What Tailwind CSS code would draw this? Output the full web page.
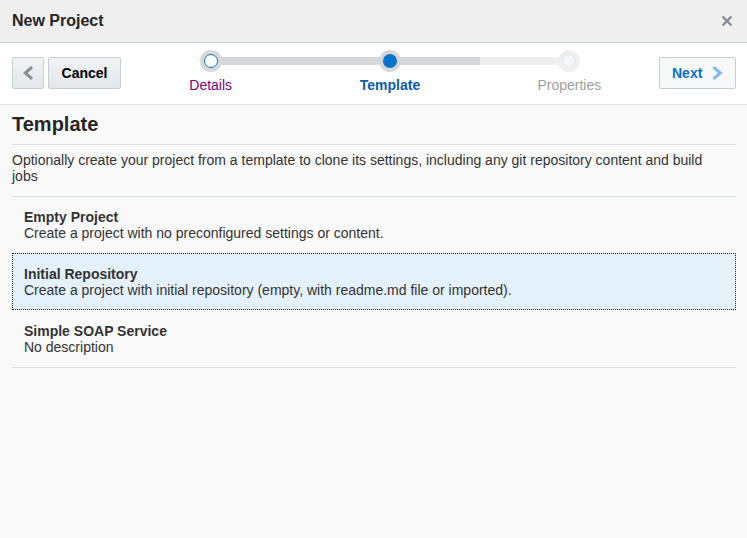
<!DOCTYPE html>
<html lang="en">
<head>
<meta charset="utf-8">
<meta name="viewport" content="width=device-width, initial-scale=1">
<title>New Project</title>
<script src="https://cdn.jsdelivr.net/npm/@tailwindcss/browser@4"></script>
</head>
<body class="min-h-screen bg-[#f9f9f9] font-['Liberation_Sans',Arial,sans-serif] text-sm/4 text-[#333333]">
<header class="flex items-center justify-between border-b border-[#c4ced7] bg-[#efefef] pt-2 pr-3 pb-2 pl-3">
  <h1 class="text-base/[26px] font-bold text-[#252525]">New Project</h1>
  <button type="button" aria-label="Close" class="flex size-4 items-center justify-center text-[#878b8f]">
    <svg class="size-[10px] shrink-0" viewBox="0 0 10 10" fill="none" stroke="currentColor" stroke-width="2.200"><path d="M0.500 0.500l9 9M9.500 0.500l-9 9"/></svg>
  </button>
</header>
<nav aria-label="Wizard" class="flex items-start border-b border-[#dfe6ea] bg-white pt-[7px] pr-[11px] pb-[11px] pl-3">
  <div class="mt-[7px] flex gap-1">
    <button type="button" aria-label="Back" class="flex size-8 items-center justify-center rounded-xs border border-[#c4ced7] bg-linear-to-b from-[#f1f3f5] to-[#e3e7ea] text-[#8b8e91]">
      <svg class="h-[14px] w-[10px]" viewBox="0 0 10 14" fill="none" stroke="currentColor" stroke-width="3"><path d="M9 1.200L2.200 7L9 12.800"/></svg>
    </button>
    <button type="button" class="h-8 min-w-[73px] rounded-xs border border-[#c4ced7] bg-linear-to-b from-[#f1f3f5] to-[#e3e7ea] px-3 font-bold text-black">Cancel</button>
  </div>
  <ol class="grid flex-1 grid-cols-3 text-center">
    <li>
      <a href="#details" class="block text-[#800080]">
        <span class="flex items-center">
          <span class="flex-1"></span>
          <span class="flex size-[22px] items-center justify-center rounded-full bg-[#d6d7d8]"><span class="size-[14px] rounded-full border border-[#0572ce] bg-white"></span></span>
          <span class="-ml-px h-2 flex-1 bg-[#d6d7d8]"></span>
        </span>
        <span class="mt-[5px] block">Details</span>
      </a>
    </li>
    <li>
      <a href="#template" aria-current="step" class="block font-bold text-[#0a5ca8]">
        <span class="flex items-center">
          <span class="-mr-px h-2 flex-1 bg-[#d6d7d8]"></span>
          <span class="flex size-[22px] items-center justify-center rounded-full bg-[#d6d7d8]"><span class="size-[14px] rounded-full bg-[#0572ce]"></span></span>
          <span class="-ml-px h-2 flex-1 bg-[#d6d7d8]"></span>
        </span>
        <span class="mt-[5px] block">Template</span>
      </a>
    </li>
    <li class="text-[#9e9e9e]">
      <span class="flex items-center">
        <span class="-mr-px h-2 flex-1 bg-[#efefef]"></span>
        <span class="flex size-[22px] items-center justify-center rounded-full bg-[#efefef]"><span class="size-[14px] rounded-full border border-[#e1e8ee] bg-[#f4f6f8]"></span></span>
        <span class="flex-1"></span>
      </span>
      <span class="mt-[5px] block">Properties</span>
    </li>
  </ol>
  <button type="button" class="mt-[7px] flex h-8 min-w-[77px] items-center justify-between rounded-xs border border-[#c4ced7] bg-[#f7f8f9] px-3 font-bold text-[#0572ce]">Next
    <svg class="h-[14px] w-[11px] text-[#82b9e7]" viewBox="0 0 11 14" fill="none" stroke="currentColor" stroke-width="3"><path d="M1.500 1.200L8.300 7L1.500 12.800"/></svg>
  </button>
</nav>
<main class="pr-[11px] pl-3">
  <h2 class="border-b border-[#d6dfe6] pt-[7px] pb-2 text-xl/6 font-bold text-[#252525]">Template</h2>
  <p class="pt-[7px] pr-4 pb-3">Optionally create your project from a template to clone its settings, including any git repository content and build jobs</p>
  <ul role="listbox" aria-label="Templates" class="border-b border-[#d6dfe6]">
    <li role="option" aria-selected="false" class="border border-transparent border-t-[#d6dfe6] px-[11px] pt-3 pb-[11px]"><strong class="block">Empty Project</strong>Create a project with no preconfigured settings or content.</li>
    <li role="option" aria-selected="true" class="border border-dotted border-[#252525] bg-[#e4f0fa] px-[11px] pt-3 pb-[11px]"><strong class="block">Initial Repository</strong>Create a project with initial repository (empty, with readme.md file or imported).</li>
    <li role="option" aria-selected="false" class="border border-transparent px-[11px] pt-3 pb-[11px]"><strong class="block">Simple SOAP Service</strong>No description</li>
  </ul>
</main>
</body>
</html>
